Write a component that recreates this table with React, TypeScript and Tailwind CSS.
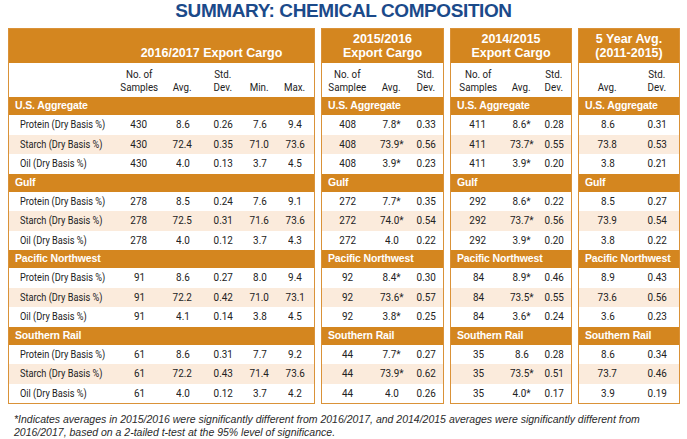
const ORANGE = "bg-[#d4861f]";

type Group = { name: string; rows: string[][] };

const LABELS = ["Protein (Dry Basis %)", "Starch (Dry Basis %)", "Oil (Dry Basis %)"];

const t1: Group[] = [
  { name: "U.S. Aggregate", rows: [["430", "8.6", "0.26", "7.6", "9.4"], ["430", "72.4", "0.35", "71.0", "73.6"], ["430", "4.0", "0.13", "3.7", "4.5"]] },
  { name: "Gulf", rows: [["278", "8.5", "0.24", "7.6", "9.1"], ["278", "72.5", "0.31", "71.6", "73.6"], ["278", "4.0", "0.12", "3.7", "4.3"]] },
  { name: "Pacific Northwest", rows: [["91", "8.6", "0.27", "8.0", "9.4"], ["91", "72.2", "0.42", "71.0", "73.1"], ["91", "4.1", "0.14", "3.8", "4.5"]] },
  { name: "Southern Rail", rows: [["61", "8.6", "0.31", "7.7", "9.2"], ["61", "72.2", "0.43", "71.4", "73.6"], ["61", "4.0", "0.12", "3.7", "4.2"]] },
];

const t2: Group[] = [
  { name: "U.S. Aggregate", rows: [["408", "7.8*", "0.33"], ["408", "73.9*", "0.56"], ["408", "3.9*", "0.23"]] },
  { name: "Gulf", rows: [["272", "7.7*", "0.35"], ["272", "74.0*", "0.54"], ["272", "4.0", "0.22"]] },
  { name: "Pacific Northwest", rows: [["92", "8.4*", "0.30"], ["92", "73.6*", "0.57"], ["92", "3.8*", "0.25"]] },
  { name: "Southern Rail", rows: [["44", "7.7*", "0.27"], ["44", "73.9*", "0.62"], ["44", "4.0", "0.26"]] },
];

const t3: Group[] = [
  { name: "U.S. Aggregate", rows: [["411", "8.6*", "0.28"], ["411", "73.7*", "0.55"], ["411", "3.9*", "0.20"]] },
  { name: "Gulf", rows: [["292", "8.6*", "0.22"], ["292", "73.7*", "0.56"], ["292", "3.9*", "0.20"]] },
  { name: "Pacific Northwest", rows: [["84", "8.9*", "0.46"], ["84", "73.5*", "0.55"], ["84", "3.6*", "0.24"]] },
  { name: "Southern Rail", rows: [["35", "8.6", "0.28"], ["35", "73.5*", "0.51"], ["35", "4.0*", "0.17"]] },
];

const t4: Group[] = [
  { name: "U.S. Aggregate", rows: [["8.6", "0.31"], ["73.8", "0.53"], ["3.8", "0.21"]] },
  { name: "Gulf", rows: [["8.5", "0.27"], ["73.9", "0.54"], ["3.8", "0.22"]] },
  { name: "Pacific Northwest", rows: [["8.9", "0.43"], ["73.6", "0.56"], ["3.6", "0.23"]] },
  { name: "Southern Rail", rows: [["8.6", "0.34"], ["73.7", "0.46"], ["3.9", "0.19"]] },
];

function Table({
  width,
  cols,
  title,
  titleClass,
  heads,
  groups,
  withLabels,
}: {
  width: string;
  cols: string;
  title: React.ReactNode;
  titleClass?: string;
  heads: React.ReactNode[];
  groups: Group[];
  withLabels?: boolean;
}) {
  return (
    <div className={`${width} shrink-0 border-[1.5px] border-[#da9238] bg-white`}>
      {/* column title */}
      <div className={`${ORANGE} h-[34px] flex items-end justify-center pb-[3px] text-white font-bold text-[12.5px] leading-[14px] text-center font-['Liberation_Sans',sans-serif] ${titleClass ?? ""}`}>
        {title}
      </div>
      {/* column heads */}
      <div className={`grid ${cols} h-[34px] items-end pb-[3px] text-[11.5px] leading-[13px] text-[#222]`}>
        {withLabels && <div />}
        {heads.map((h, i) => (
          <div key={i} className="text-center">
            <span className="inline-block scale-x-[0.85]">{h}</span>
          </div>
        ))}
      </div>
      {groups.map((g) => (
        <div key={g.name}>
          <div className={`${ORANGE} h-[18px] flex items-center pl-[6px] text-white font-bold text-[10.5px] font-['Liberation_Sans',sans-serif] tracking-[-0.15px]`}>
            {g.name}
          </div>
          {g.rows.map((r, ri) => (
            <div key={ri} className={`grid ${cols} h-[19.5px] items-center text-[11.5px] text-[#222] ${ri === 1 ? "bg-[#fbebdc]" : ""}`}>
              {withLabels && (
                <div className="pl-[11px] whitespace-nowrap">
                  <span className="inline-block origin-left scale-x-[0.8]">{LABELS[ri]}</span>
                </div>
              )}
              {r.map((v, vi) => (
                <div key={vi} className="text-center">
                  <span className="inline-block scale-x-[0.86]">{v}</span>
                </div>
              ))}
            </div>
          ))}
        </div>
      ))}
    </div>
  );
}

export default function App() {
  return (
    <div className="w-[687px] h-[439px] bg-white font-['Roboto',sans-serif] overflow-hidden">
      <h1 className="h-[28px] text-center text-[#1b4a8a] font-bold text-[19px] leading-[22px] font-['Liberation_Sans',sans-serif] tracking-[-0.4px]">
        SUMMARY: CHEMICAL COMPOSITION
      </h1>
      <div className="flex gap-[6px] px-[8px]">
        <Table
          width="w-[307px]"
          cols="grid-cols-[108px_44px_43px_38px_35px_36px]"
          title="2016/2017 Export Cargo"
          titleClass="pl-[100px]"
          withLabels
          heads={[<>No. of<br />Samples</>, "Avg.", <>Std.<br />Dev.</>, "Min.", "Max."]}
          groups={t1}
        />
        <Table
          width="w-[123px]"
          cols="grid-cols-[51px_37px_32px]"
          title={<>2015/2016<br />Export Cargo</>}
          heads={[<>No. of<br />Samplee</>, "Avg.", <>Std.<br />Dev.</>]}
          groups={t2}
        />
        <Table
          width="w-[122px]"
          cols="grid-cols-[54px_33px_32px]"
          title={<>2014/2015<br />Export Cargo</>}
          heads={[<>No. of<br />Samples</>, "Avg.", <>Std.<br />Dev.</>]}
          groups={t3}
        />
        <Table
          width="w-[102px]"
          cols="grid-cols-[57px_42px]"
          title={<>5 Year Avg.<br />(2011-2015)</>}
          heads={["Avg.", <>Std.<br />Dev.</>]}
          groups={t4}
        />
      </div>
      <p className="mt-[9px] px-[14px] text-[10.5px] leading-[13px] italic text-[#2a2a2a] font-['Liberation_Sans',sans-serif]">
        *Indicates averages in 2015/2016 were significantly different from 2016/2017, and 2014/2015 averages were significantly different from 2016/2017, based on a 2-tailed t-test at the 95% level of significance.
      </p>
    </div>
  );
}
